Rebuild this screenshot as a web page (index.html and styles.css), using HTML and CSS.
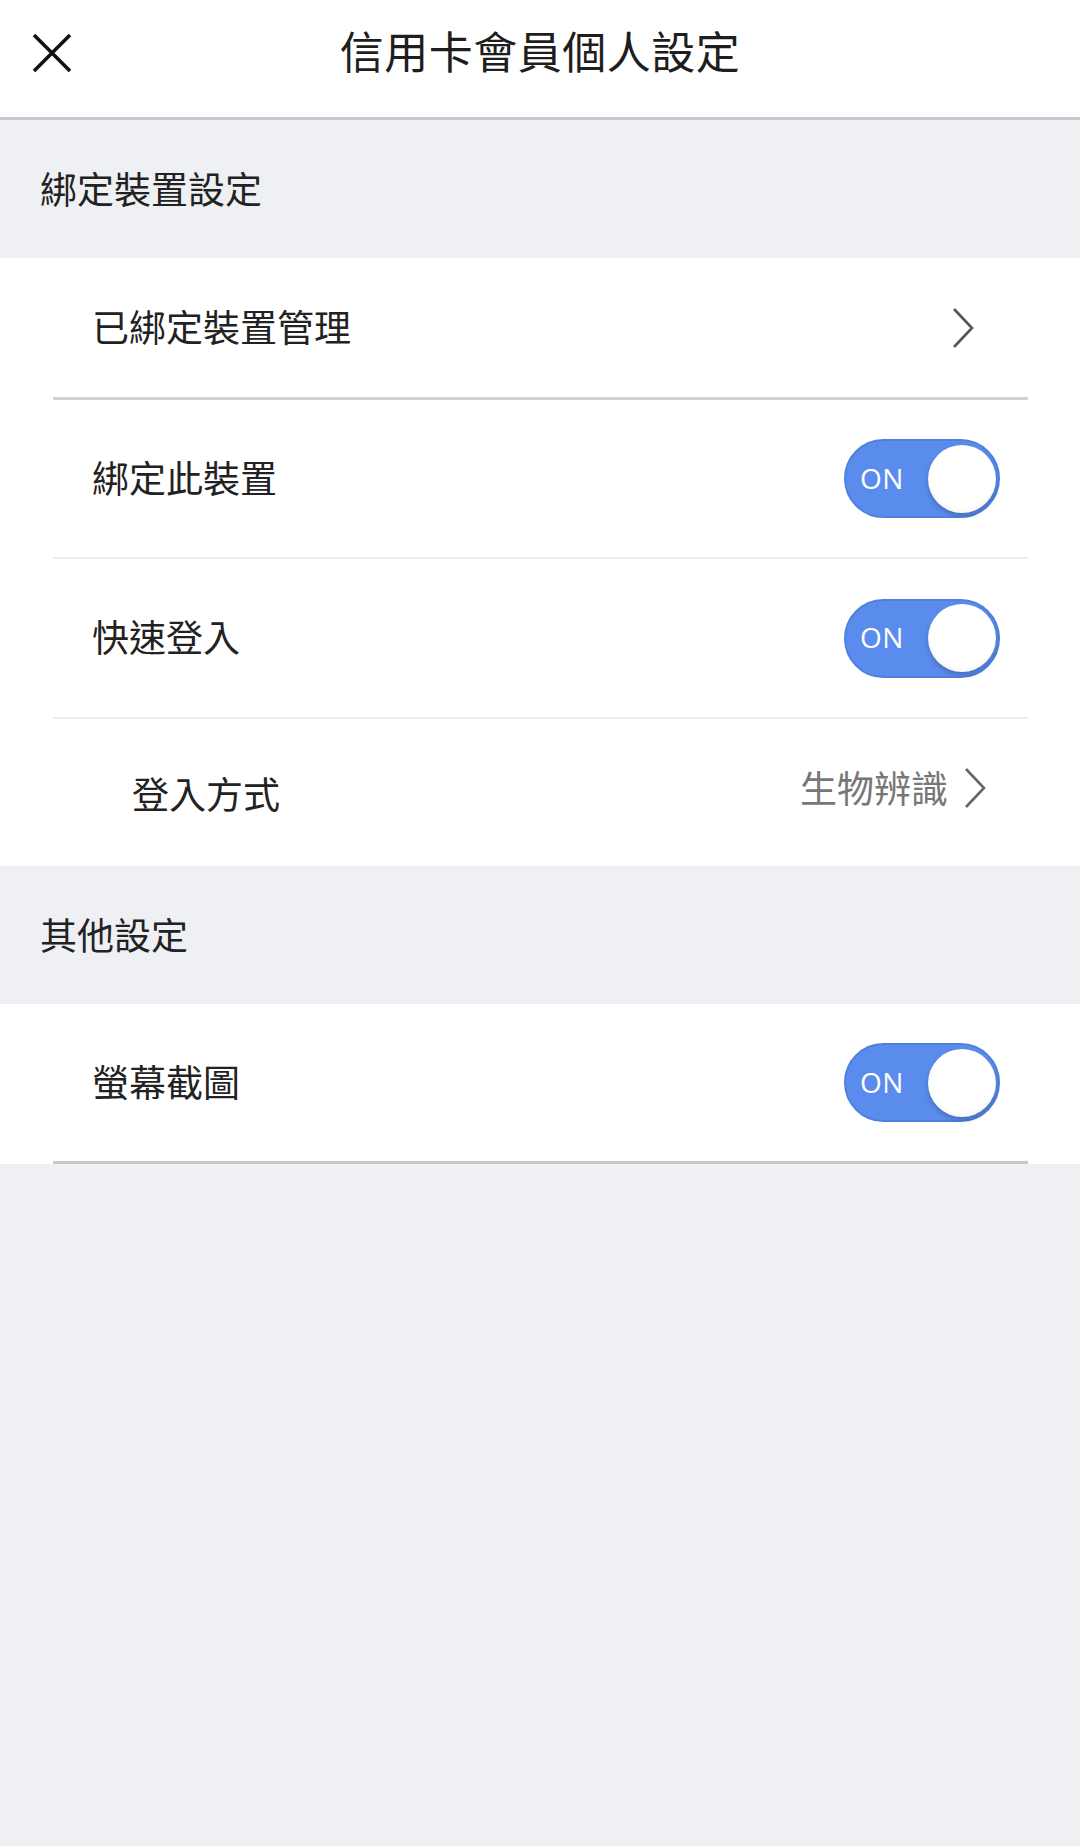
FILE: index.html
```html
<!DOCTYPE html>
<html lang="zh-Hant">
<head>
<meta charset="utf-8">
<title>信用卡會員個人設定</title>
<link rel="stylesheet" href="styles.css">
</head>
<body>
<div class="page">
  <header class="topbar">
    <button class="close-btn" aria-label="關閉">
      <svg width="42" height="42" viewBox="0 0 42 42"><path d="M3 3 L39 39 M39 3 L3 39" stroke="#111" stroke-width="3.6" fill="none"/></svg>
    </button>
    <h1 class="title">信用卡會員個人設定</h1>
  </header>

  <div class="section-head">綁定裝置設定</div>
  <div class="group">
    <div class="row row-link">
      <span class="label">已綁定裝置管理</span>
      <svg class="chev" width="22" height="40" viewBox="0 0 22 40"><polyline points="2,1 20,20 2,39" stroke="#555" stroke-width="2.6" fill="none"/></svg>
    </div>
    <div class="divider divider-strong"></div>
    <div class="row row-toggle">
      <span class="label">綁定此裝置</span>
      <div class="toggle"><span class="toggle-text">ON</span><span class="knob"></span></div>
    </div>
    <div class="divider"></div>
    <div class="row row-toggle row-toggle-tall">
      <span class="label">快速登入</span>
      <div class="toggle"><span class="toggle-text">ON</span><span class="knob"></span></div>
    </div>
    <div class="divider"></div>
    <div class="row row-sub">
      <span class="label label-sub">登入方式</span>
      <div class="value-wrap">
        <span class="value">生物辨識</span>
        <svg class="chev" width="22" height="40" viewBox="0 0 22 40"><polyline points="2,1 20,20 2,39" stroke="#666" stroke-width="2.6" fill="none"/></svg>
      </div>
    </div>
  </div>

  <div class="section-head section-head-2">其他設定</div>
  <div class="group">
    <div class="row row-toggle">
      <span class="label">螢幕截圖</span>
      <div class="toggle"><span class="toggle-text">ON</span><span class="knob"></span></div>
    </div>
    <div class="group-end">
      <div class="divider divider-strong divider-last"></div>
    </div>
  </div>
</div>
</body>
</html>
```

FILE: styles.css
```css
* { box-sizing: border-box; }
html, body {
  margin: 0;
  padding: 0;
}
body {
  background: #eff0f4;
  font-family: "Noto Sans CJK TC", "Noto Sans", sans-serif;
  color: #222;
}
.page {
  width: 1080px;
  min-height: 1846px;
  background: #eff0f4;
}
.topbar {
  position: relative;
  height: 120px;
  background: #fff;
  border-bottom: 3px solid #c9c9cb;
  display: flex;
  align-items: center;
  justify-content: center;
  padding-bottom: 18px;
}
.close-btn {
  position: absolute;
  left: 31px;
  top: 32px;
  width: 42px;
  height: 42px;
  padding: 0;
  border: 0;
  background: transparent;
  display: flex;
}
.title {
  margin: 0;
  font-size: 44px;
  font-weight: 400;
  line-height: 1;
  color: #1e1e1e;
  letter-spacing: 0.5px;
}
.section-head {
  height: 138px;
  display: flex;
  align-items: center;
  padding-left: 40px;
  padding-bottom: 2px;
  font-size: 37px;
  line-height: 1;
  color: #222;
}
.section-head-2 {
  height: 138px;
  padding-bottom: 2px;
}
.group {
  background: #fff;
}
.row {
  display: flex;
  align-items: center;
  justify-content: space-between;
  padding-left: 92px;
}
.label {
  font-size: 37px;
  line-height: 1;
  color: #222;
  margin-bottom: 3px;
}
.row-link {
  height: 139px;
  padding-right: 106px;
}
.row-toggle {
  height: 157px;
  padding-right: 80px;
}
.row-toggle-tall {
  height: 158px;
}
.row-sub {
  height: 147px;
  padding-left: 132px;
  padding-right: 94px;
}
.label-sub {
  margin-top: 2px;
  margin-bottom: 0;
}
.value-wrap {
  display: flex;
  align-items: center;
  gap: 16px;
  margin-top: -10px;
}
.value {
  font-size: 37px;
  line-height: 1;
  color: #777;
}
.chev {
  display: block;
}
.divider {
  height: 2px;
  margin: 0 52px 0 53px;
  background: #ececec;
}
.divider-strong {
  height: 3px;
  background: #d2d2d4;
}
.group-end {
  background: #fff;
}
.divider-last {
  background: #c8c8cc;
}
.toggle {
  width: 156px;
  height: 79px;
  border-radius: 40px;
  background: #5a8cee;
  border: 2px solid #4f80dc;
  display: flex;
  align-items: center;
  padding: 0 2px 0 14px;
}
.toggle-text {
  font-family: "Open Sans", "Noto Sans", sans-serif;
  font-size: 28px;
  line-height: 1;
  color: #fff;
  letter-spacing: 0.5px;
  margin-bottom: 2px;
}
.knob {
  margin-left: auto;
  width: 68px;
  height: 68px;
  border-radius: 50%;
  background: #fff;
  box-shadow: 0 3px 5px rgba(0, 0, 0, 0.22), inset 0 -3px 4px rgba(0, 0, 0, 0.04);
}
```
